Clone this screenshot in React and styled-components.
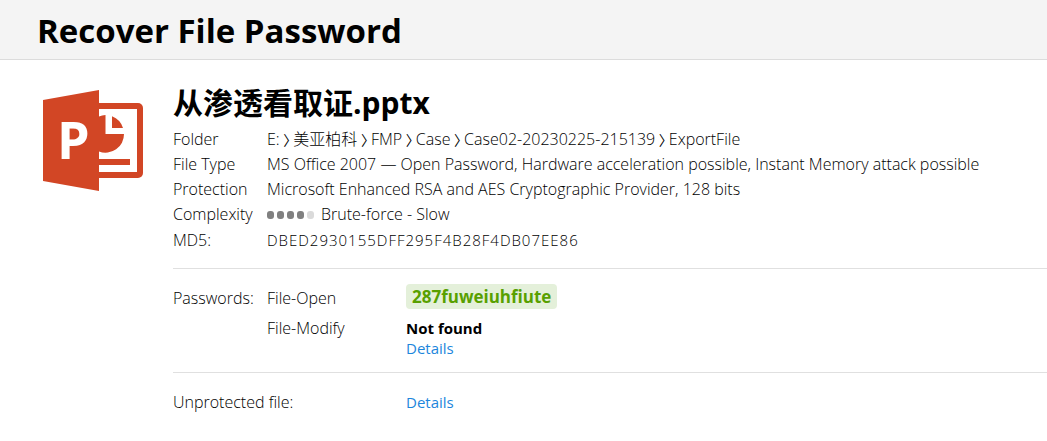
import React from "react";
import styled, { createGlobalStyle } from "styled-components";

const GlobalStyle = createGlobalStyle`
  body {
    margin: 0;
    background: #fff;
    color: #000;
    font-family: "Open Sans", "Noto Sans CJK SC", sans-serif;
    font-size: 16px;
    font-weight: 300;
    line-height: 25px;
  }
`;

const Header = styled.header`
  padding: 7px 37px 4px;
  background: #f4f4f4;
  border-bottom: 1px solid #dcdcdc;
`;

const PageTitle = styled.h1`
  margin: 0;
  font-size: 33px;
  line-height: 48px;
  font-weight: 700;
`;

const Main = styled.main`
  display: flex;
  align-items: flex-start;
  gap: 30px;
  padding: 24px 0 24px 43px;
`;

const FileIcon = styled.svg`
  flex: none;
  width: 100px;
  height: 101px;
  margin-top: 6px;
`;

const Report = styled.div`
  flex: 1;
  min-width: 0;
`;

const FileName = styled.h2`
  margin: 0 0 6px;
  font-size: 30px;
  line-height: 37px;
  font-weight: 700;
`;

const Properties = styled.dl`
  display: grid;
  grid-template-columns: 94px 1fr;
  margin: 0;
`;

const Term = styled.dt`
  white-space: nowrap;
  line-height: ${(p) => p.$line || 25}px;
`;

const Value = styled.dd`
  margin: 0;
  line-height: ${(p) => p.$line || 25}px;
`;

const Hash = styled.span`
  font-size: 15px;
  letter-spacing: 1px;
`;

const Separator = styled.span`
  margin-right: 3px;
  font-size: 14px;
  font-weight: 400;
  font-feature-settings: "halt";
`;

const Rating = styled.span`
  display: inline-flex;
  gap: 3px;
  margin-right: 7px;
  vertical-align: 1px;
`;

const Dot = styled.span`
  width: 7px;
  height: 8px;
  border-radius: 3px;
  background: ${(p) => (p.$on ? "#808080" : "#dadada")};
`;

const Section = styled.section`
  display: grid;
  grid-template-columns: 94px 1fr;
  margin-top: 14px;
  padding-top: 15px;
  border-top: 1px solid #e0e0e0;
`;

const SectionLabel = styled.div`
  line-height: 29px;
`;

const Results = styled.dl`
  display: grid;
  grid-template-columns: 139px 1fr;
  row-gap: 3px;
  margin: 0;
`;

const FoundPassword = styled.strong`
  display: block;
  width: fit-content;
  padding: 0 6px;
  border-radius: 4px;
  background: #e4f0da;
  color: #58a000;
  font-size: 17px;
  font-weight: 700;
  line-height: 25px;
`;

const Status = styled.strong`
  display: block;
  font-size: 15px;
  font-weight: 700;
`;

const LinkLine = styled.div`
  line-height: 15px;
`;

const Link = styled.a`
  color: #1c86dc;
  font-size: 15px;
  font-weight: 400;
  text-decoration: none;
`;

const FileRow = styled.section`
  display: grid;
  grid-template-columns: 233px 1fr;
  margin-top: 16px;
  padding-top: 17px;
  border-top: 1px solid #e0e0e0;
`;

const folders = ["E:", "美亚柏科", "FMP", "Case", "Case02-20230225-215139", "ExportFile"];

function PowerPointIcon() {
  return (
    <FileIcon viewBox="0 0 100 101" role="img" aria-label="PowerPoint file">
      <rect x="40" y="13" width="60" height="75" rx="5" fill="#d24625" />
      <rect x="50" y="19" width="44" height="63" fill="#fff" />
      <path d="M56 26.5A18.5 18.5 0 0 1 62.5 25V44H81A18.5 18.5 0 0 1 56 61.5Z" fill="#d24625" />
      <path d="M69 26.3A18.5 18.5 0 0 1 80 38H69Z" fill="#d24625" />
      <rect x="50" y="69" width="37" height="6" fill="#d24625" />
      <path d="M0 10L56 0V101L0 91Z" fill="#d24625" />
      <text x="14" y="69" fill="#fff" fontFamily="Open Sans" fontSize="52" fontWeight="700">P</text>
    </FileIcon>
  );
}

export default function App() {
  return (
    <>
      <GlobalStyle />
      <Header>
        <PageTitle>Recover File Password</PageTitle>
      </Header>
      <Main>
        <PowerPointIcon />
        <Report>
          <FileName>从渗透看取证.pptx</FileName>
          <Properties>
            <Term>Folder</Term>
            <Value>
              {folders.map((name, i) => (
                <React.Fragment key={name}>
                  {i > 0 && <Separator> 〉</Separator>}
                  {name}
                </React.Fragment>
              ))}
            </Value>
            <Term>File Type</Term>
            <Value>MS Office 2007 — Open Password, Hardware acceleration possible, Instant Memory attack possible</Value>
            <Term>Protection</Term>
            <Value>Microsoft Enhanced RSA and AES Cryptographic Provider, 128 bits</Value>
            <Term>Complexity</Term>
            <Value>
              <Rating role="img" aria-label="4 of 5">
                {[1, 2, 3, 4, 5].map((n) => (
                  <Dot key={n} $on={n < 5} />
                ))}
              </Rating>
              Brute-force - Slow
            </Value>
            <Term $line={27}>MD5:</Term>
            <Value $line={27}>
              <Hash>DBED2930155DFF295F4B28F4DB07EE86</Hash>
            </Value>
          </Properties>
          <Section>
            <SectionLabel>Passwords:</SectionLabel>
            <Results>
              <Term $line={29}>File-Open</Term>
              <Value>
                <FoundPassword>287fuweiuhfiute</FoundPassword>
              </Value>
              <Term>File-Modify</Term>
              <Value>
                <Status>Not found</Status>
                <LinkLine>
                  <Link href="#file-modify">Details</Link>
                </LinkLine>
              </Value>
            </Results>
          </Section>
          <FileRow>
            <div>Unprotected file:</div>
            <div>
              <Link href="#unprotected-file">Details</Link>
            </div>
          </FileRow>
        </Report>
      </Main>
    </>
  );
}
